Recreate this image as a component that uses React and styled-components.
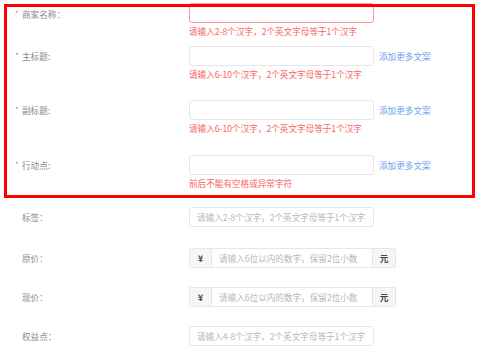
import React from "react";
import styled, { createGlobalStyle } from "styled-components";

const Global = createGlobalStyle`
  html, body { margin: 0; padding: 0; background: #fff; }
  body { font-family: "Noto Sans CJK SC", "Noto Sans", sans-serif; }
  * { box-sizing: border-box; }
`;

const Page = styled.div`
  width: 481px;
  height: 353px;
  padding: 4px 6px 0 4px;
  overflow: hidden;
`;

const Highlight = styled.div`
  display: flex;
  flex-direction: column;
  padding-bottom: 9px;
  margin-bottom: 9px;
  outline: 3px solid #ff0000;
  outline-offset: -3px;
`;

const Plain = styled.div`
  display: flex;
  flex-direction: column;
`;

const Row = styled.div`
  display: grid;
  grid-template-columns: 185px 1fr;
  align-items: start;
  margin-bottom: ${(p) => p.$mb || 0}px;
`;

const Label = styled.div`
  display: flex;
  align-items: center;
  height: 19px;
  padding-left: 11px;
  font-size: 8.6px;
  color: #8a8a8a;
  white-space: nowrap;
`;

const Star = styled.span`
  display: inline-block;
  width: 7px;
  color: #f76b6b;
  font-size: 8px;
`;

const Control = styled.div`
  display: flex;
  flex-direction: column;
`;

const InputLine = styled.div`
  display: flex;
  align-items: center;
  gap: 5px;
`;

const Box = styled.div`
  display: flex;
  align-items: center;
  width: ${(p) => p.$w || 185}px;
  height: 20px;
  margin-top: ${(p) => (p.$error ? "-1px" : "0")};
  padding: 0 7px;
  border: 1px solid ${(p) => (p.$error ? "#ff9a9a" : "#e6e6e6")};
  border-radius: ${(p) => (p.$flat ? "0" : "3px")};
  background: #fff;
`;

const Field = styled.input`
  flex: 1;
  min-width: 0;
  height: 100%;
  padding: 0;
  border: none;
  outline: none;
  background: transparent;
  font-family: inherit;
  font-size: 8.6px;
  color: #333;
  &::placeholder { color: #b8b8b8; }
`;

const AddLink = styled.a`
  font-size: 8.6px;
  color: #6a9ff2;
  text-decoration: none;
  white-space: nowrap;
  cursor: pointer;
`;

const ErrorText = styled.div`
  margin-top: 2px;
  height: 12px;
  line-height: 12px;
  font-size: 8.6px;
  color: #f86464;
  white-space: nowrap;
`;

const Group = styled.div`
  display: flex;
  height: 20px;
`;

const Addon = styled.span`
  display: flex;
  align-items: center;
  justify-content: center;
  width: ${(p) => p.$w}px;
  height: 20px;
  background: #f6f6f6;
  border: 1px solid #e6e6e6;
  border-radius: ${(p) => (p.$side === "left" ? "2px 0 0 2px" : "0 2px 2px 0")};
  ${(p) => (p.$side === "left" ? "border-right: none;" : "border-left: none;")}
  font-size: 8.6px;
  font-weight: 700;
  color: #444;
`;

const HINT = "请输入2-8个汉字，2个英文字母等于1个汉字";
const HINT610 = "请输入6-10个汉字，2个英文字母等于1个汉字";
const PRICE = "请输入6位以内的数字，保留2位小数";

function TextInput({ w, error, flat, placeholder }) {
  return (
    <Box $w={w} $error={error} $flat={flat}>
      <Field placeholder={placeholder} />
    </Box>
  );
}

function FieldLabel({ required, children }) {
  return (
    <Label>
      <Star>{required ? "*" : ""}</Star>
      {children}
    </Label>
  );
}

function PriceRow({ label, mb }) {
  return (
    <Row $mb={mb}>
      <FieldLabel>{label}</FieldLabel>
      <Group>
        <Addon $w={22} $side="left">¥</Addon>
        <TextInput w={162} flat placeholder={PRICE} />
        <Addon $w={23} $side="right">元</Addon>
      </Group>
    </Row>
  );
}

export default function App() {
  return (
    <>
      <Global />
      <Page>
        <Highlight>
          <Row $mb={9}>
            <FieldLabel required>商家名称：</FieldLabel>
            <Control>
              <InputLine>
                <TextInput error />
              </InputLine>
              <ErrorText>{HINT}</ErrorText>
            </Control>
          </Row>
          <Row $mb={20}>
            <FieldLabel required>主标题:</FieldLabel>
            <Control>
              <InputLine>
                <TextInput />
                <AddLink>添加更多文案</AddLink>
              </InputLine>
              <ErrorText>{HINT610}</ErrorText>
            </Control>
          </Row>
          <Row $mb={21}>
            <FieldLabel required>副标题:</FieldLabel>
            <Control>
              <InputLine>
                <TextInput />
                <AddLink>添加更多文案</AddLink>
              </InputLine>
              <ErrorText>{HINT610}</ErrorText>
            </Control>
          </Row>
          <Row>
            <FieldLabel required>行动点:</FieldLabel>
            <Control>
              <InputLine>
                <TextInput />
                <AddLink>添加更多文案</AddLink>
              </InputLine>
              <ErrorText>前后不能有空格或异常字符</ErrorText>
            </Control>
          </Row>
        </Highlight>
        <Plain>
          <Row $mb={21}>
            <FieldLabel>标签：</FieldLabel>
            <TextInput placeholder={HINT} />
          </Row>
          <PriceRow label="原价：" mb={19} />
          <PriceRow label="现价：" mb={19} />
          <Row>
            <FieldLabel>权益点：</FieldLabel>
            <TextInput placeholder="请输入4-8个汉字，2个英文字母等于1个汉字" />
          </Row>
        </Plain>
      </Page>
    </>
  );
}
